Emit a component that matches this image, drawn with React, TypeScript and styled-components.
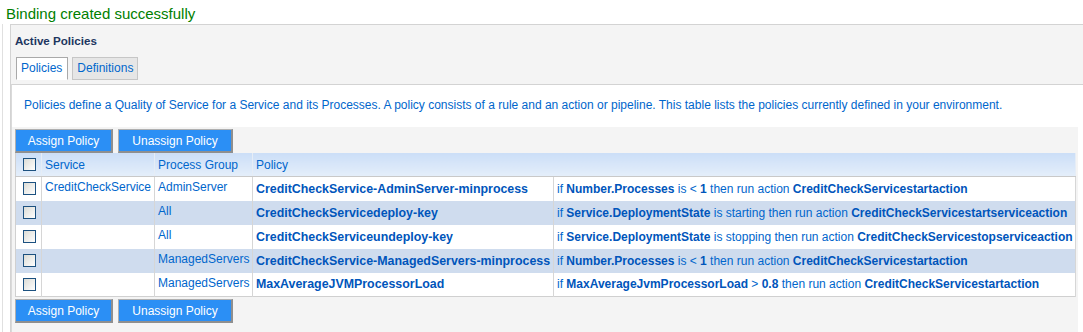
import React from "react";
import styled, { createGlobalStyle } from "styled-components";

const GlobalStyle = createGlobalStyle`
  html, body { margin: 0; padding: 0; background: #ffffff; }
  body { font-family: "Liberation Sans", Arial, sans-serif; font-size: 12px; }
`;

const Page = styled.div`
  width: 1083px;
  height: 332px;
  overflow: hidden;
  display: flex;
  flex-direction: column;
`;

const Message = styled.div`
  height: 24px;
  box-sizing: border-box;
  padding: 5px 0 0 6px;
  font-size: 15px;
  line-height: 18px;
  color: #008000;
`;

const Frame = styled.div`
  flex: 1;
  display: flex;
  flex-direction: column;
  margin-left: 2px;
  border-left: 1px solid #e0e0e0;
  padding-left: 7px;
`;

const Panel = styled.section`
  flex: 1;
  display: flex;
  flex-direction: column;
  background: #f4f4f4;
  border-top: 1px solid #d3d3d3;
  border-left: 1px solid #d3d3d3;
`;

const PanelTitle = styled.h2`
  margin: 0;
  padding: 9px 0 0 4px;
  font-size: 11.6px;
  line-height: 14px;
  font-weight: bold;
  color: #1d3660;
`;

const TabRow = styled.div`
  display: flex;
  gap: 4px;
  margin: 9px 0 4px 5px;
`;

const Tab = styled.div<{ $active?: boolean }>`
  box-sizing: border-box;
  height: 23px;
  line-height: 21px;
  padding: ${(p) => (p.$active ? "0 5px 0 4px" : "0 4px")};
  border: 1px solid ${(p) => (p.$active ? "#a9a9a9" : "#c6c6c6")};
  border-bottom-color: ${(p) => (p.$active ? "#ffffff" : "#c6c6c6")};
  background: ${(p) => (p.$active ? "#ffffff" : "#e6e6e6")};
  color: #0066cc;
  font-size: 12px;
`;

const ContentBox = styled.div`
  flex: 1;
  display: flex;
  flex-direction: column;
  background: #ffffff;
  border-top: 1px solid #d3d3d3;
  border-left: 1px solid #dadada;
`;

const Description = styled.p`
  margin: 0;
  height: 42px;
  box-sizing: border-box;
  padding: 13px 0 0 12px;
  line-height: 14px;
  color: #0066cc;
  white-space: nowrap;
`;

const TableArea = styled.div`
  flex: 1;
  margin-right: 5px;
  padding: 2px 0 0 3px;
  background: #f4f4f4;
  display: flex;
  flex-direction: column;
  align-items: flex-start;
`;

const ButtonBar = styled.div<{ $top?: number }>`
  display: flex;
  gap: 5px;
  margin-top: ${(p) => p.$top ?? 0}px;
`;

const Button = styled.button<{ $w: number }>`
  box-sizing: border-box;
  width: ${(p) => p.$w}px;
  height: 24px;
  padding: 0;
  border-style: solid;
  border-width: 1px 2px 2px 1px;
  border-color: #b0b0b0 #8f8f8f #8f8f8f #b0b0b0;
  background: #2b8ff5;
  color: #ffffff;
  font-family: "Liberation Sans", Arial, sans-serif;
  font-size: 12px;
  line-height: 20px;
  cursor: pointer;
`;

const Table = styled.table`
  width: 1061px;
  border-collapse: collapse;
  table-layout: fixed;
  border: 1px solid #d0d0d0;
  border-top: none;
`;

const HeadCell = styled.th`
  height: 23px;
  padding: 0 3px;
  text-align: left;
  font-weight: normal;
  color: #0066cc;
  background: linear-gradient(#cbdef7, #e4eefa);
  border-right: 1px solid #e6edf6;
  border-bottom: 1px solid #c9c9c9;
  white-space: nowrap;
`;

const Row = styled.tr<{ $alt: boolean }>`
  background: ${(p) => (p.$alt ? "#cfdcee" : "#ffffff")};
`;

const Cell = styled.td<{ $top?: boolean }>`
  height: 24px;
  box-sizing: border-box;
  padding: ${(p) => (p.$top ? "3px 3px 0" : "0 3px")};
  vertical-align: ${(p) => (p.$top ? "top" : "middle")};
  border-right: 1px solid #d6d6d6;
  color: #0066cc;
  line-height: 14px;
  white-space: nowrap;
  overflow: hidden;
`;

const CheckCell = styled.td`
  padding: 0 0 0 7px;
  vertical-align: middle;
  border-right: 1px solid #d6d6d6;
`;

const HeadCheckCell = styled(HeadCell)`
  padding: 0 0 0 7px;
`;

const Check = styled.span`
  display: block;
  width: 13px;
  height: 13px;
  box-sizing: border-box;
  border: 1px solid #1c5180;
  background: linear-gradient(135deg, #dcdcd6 0%, #f4f4f2 70%, #ffffff 100%);
`;

const PolicyName = styled.span`
  font-weight: bold;
  font-size: 12.4px;
  color: #0055bb;
`;

const RuleText = styled.span<{ $bold?: boolean }>`
  font-weight: ${(p) => (p.$bold ? "bold" : "normal")};
  color: ${(p) => (p.$bold ? "#0055bb" : "#0066cc")};
`;

type Part = [string, boolean];

interface PolicyRow {
  service: string;
  group: string;
  policy: string;
  rule: Part[];
}

const minRule: Part[] = [
  ["if ", false],
  ["Number.Processes", true],
  [" is < ", false],
  ["1", true],
  [" then run action ", false],
  ["CreditCheckServicestartaction", true],
];

const rows: PolicyRow[] = [
  { service: "CreditCheckService", group: "AdminServer", policy: "CreditCheckService-AdminServer-minprocess", rule: minRule },
  {
    service: "",
    group: "All",
    policy: "CreditCheckServicedeploy-key",
    rule: [
      ["if ", false],
      ["Service.DeploymentState", true],
      [" is starting then run action ", false],
      ["CreditCheckServicestartserviceaction", true],
    ],
  },
  {
    service: "",
    group: "All",
    policy: "CreditCheckServiceundeploy-key",
    rule: [
      ["if ", false],
      ["Service.DeploymentState", true],
      [" is stopping then run action ", false],
      ["CreditCheckServicestopserviceaction", true],
    ],
  },
  { service: "", group: "ManagedServers", policy: "CreditCheckService-ManagedServers-minprocess", rule: minRule },
  {
    service: "",
    group: "ManagedServers",
    policy: "MaxAverageJVMProcessorLoad",
    rule: [
      ["if ", false],
      ["MaxAverageJvmProcessorLoad", true],
      [" > ", false],
      ["0.8", true],
      [" then run action ", false],
      ["CreditCheckServicestartaction", true],
    ],
  },
];

const Buttons: React.FC<{ top?: number }> = ({ top }) => (
  <ButtonBar $top={top}>
    <Button $w={98}>Assign Policy</Button>
    <Button $w={115}>Unassign Policy</Button>
  </ButtonBar>
);

export default function App() {
  return (
    <Page>
      <GlobalStyle />
      <Message>Binding created successfully</Message>
      <Frame>
        <Panel>
          <PanelTitle>Active Policies</PanelTitle>
          <TabRow>
            <Tab $active>Policies</Tab>
            <Tab>Definitions</Tab>
          </TabRow>
          <ContentBox>
            <Description>
              Policies define a Quality of Service for a Service and its Processes. A policy consists of a rule and an
              action or pipeline. This table lists the policies currently defined in your environment.
            </Description>
            <TableArea>
              <Buttons />
              <Table>
                <colgroup>
                  <col style={{ width: 26 }} />
                  <col style={{ width: 113 }} />
                  <col style={{ width: 98 }} />
                  <col style={{ width: 301 }} />
                  <col />
                </colgroup>
                <thead>
                  <tr>
                    <HeadCheckCell>
                      <Check />
                    </HeadCheckCell>
                    <HeadCell>Service</HeadCell>
                    <HeadCell>Process Group</HeadCell>
                    <HeadCell colSpan={2}>Policy</HeadCell>
                  </tr>
                </thead>
                <tbody>
                  {rows.map((r, i) => (
                    <Row key={i} $alt={i % 2 === 1}>
                      <CheckCell>
                        <Check />
                      </CheckCell>
                      <Cell $top>{r.service}</Cell>
                      <Cell $top>{r.group}</Cell>
                      <Cell>
                        <PolicyName>{r.policy}</PolicyName>
                      </Cell>
                      <Cell>
                        {r.rule.map(([t, b], j) => (
                          <RuleText key={j} $bold={b}>
                            {t}
                          </RuleText>
                        ))}
                      </Cell>
                    </Row>
                  ))}
                </tbody>
              </Table>
              <Buttons top={2} />
            </TableArea>
          </ContentBox>
        </Panel>
      </Frame>
    </Page>
  );
}
